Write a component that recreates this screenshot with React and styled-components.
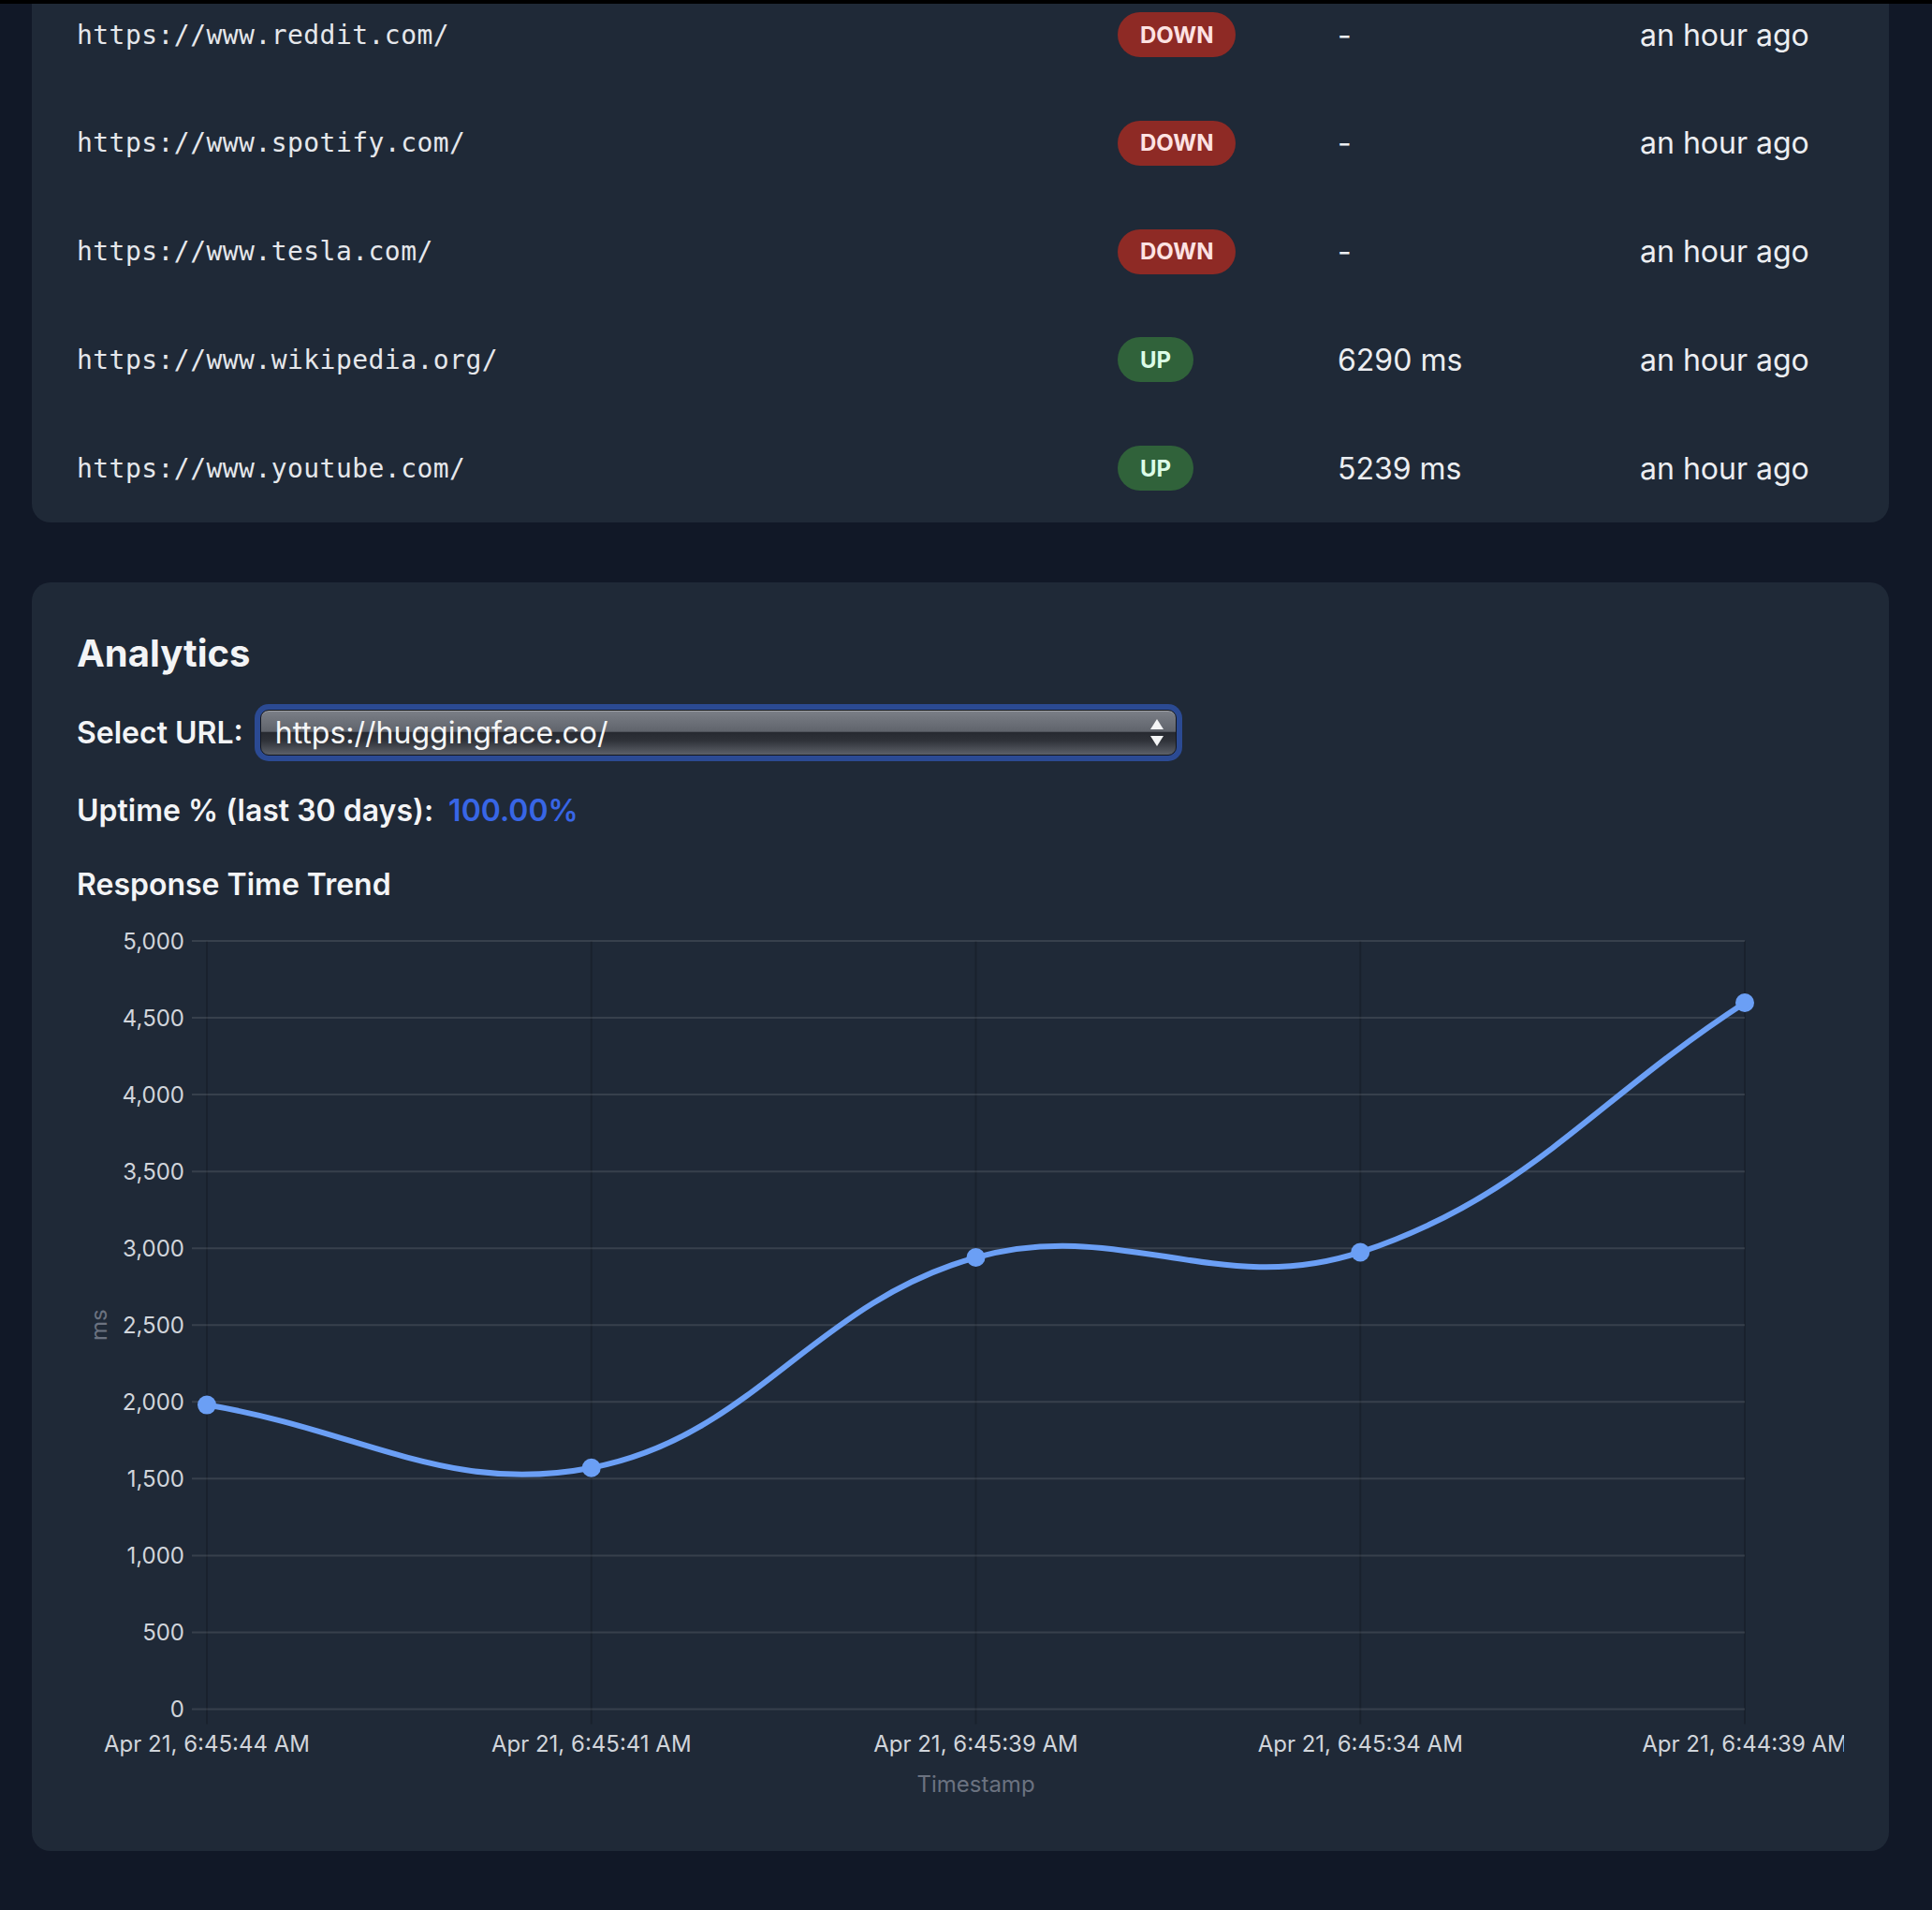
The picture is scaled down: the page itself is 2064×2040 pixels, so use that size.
import React from "react";
import styled, { createGlobalStyle } from "styled-components";

const GlobalStyle = createGlobalStyle`
  body {
    margin: 0;
    background: #111827;
    font-family: Inter, "Noto Sans", sans-serif;
    color: #f3f4f6;
  }
`;

const Page = styled.div`
  min-height: 2040px;
  background: #111827;
  overflow: hidden;
`;

const TopEdge = styled.div`
  position: relative;
  z-index: 2;
  height: 4px;
  background: #000;
`;

const Content = styled.div`
  padding: 0 46px 0 34px;
`;

const Card = styled.section`
  background: #1f2937;
  border-radius: 20px;
  padding: ${(p) => p.$padding || "48px"};
  margin-top: ${(p) => p.$top || "0"};
`;

const Row = styled.div`
  display: grid;
  grid-template-columns: 1112px 235px 323px 1fr;
  align-items: center;
  height: 115.75px;
`;

const Url = styled.span`
  font-family: "DejaVu Sans Mono", "Liberation Mono", monospace;
  font-size: 28px;
  letter-spacing: 0.45px;
  color: #e5e7eb;
`;

const Badge = styled.span`
  justify-self: start;
  display: inline-flex;
  align-items: center;
  height: 48px;
  padding: 0 24px;
  border-radius: 24px;
  font-size: 24px;
  font-weight: 700;
  background: ${(p) => (p.$up ? "#30623a" : "#8e2a25")};
  color: ${(p) => (p.$up ? "#dcfce7" : "#fde2e2")};
`;

const Cell = styled.span`
  font-size: 32px;
  color: #eceef1;
`;

const Title = styled.h2`
  margin: 0 0 26px;
  font-size: 40px;
  line-height: 56px;
  font-weight: 700;
  color: #f3f4f6;
`;

const Field = styled.div`
  display: flex;
  align-items: center;
  margin-bottom: ${(p) => p.$gap || "26px"};
`;

const Label = styled.span`
  font-size: 32px;
  line-height: 48px;
  font-weight: 600;
  color: #f3f4f6;
  margin-right: ${(p) => p.$space || "12px"};
`;

const Value = styled.span`
  font-size: 32px;
  line-height: 48px;
  font-weight: 600;
  color: #3866e6;
`;

const SelectRing = styled.div`
  position: relative;
  width: 991px;
  height: 61px;
  box-sizing: border-box;
  padding: 6px;
  border-radius: 15px;
  background: #2b4a93;
`;

const Select = styled.select`
  appearance: none;
  width: 100%;
  height: 49px;
  box-sizing: border-box;
  margin: 0;
  padding: 0 0 0 15px;
  border: 1px solid #14171c;
  border-radius: 9px;
  font-family: Inter, "Noto Sans", sans-serif;
  font-size: 32px;
  color: #f5f6f7;
  outline: none;
  background: linear-gradient(
    to bottom,
    #7b7f87 0%,
    #60646c 47%,
    #272a31 50%,
    #2f3239 68%,
    #5c6068 100%
  );
  box-shadow: inset 0 1px 0 rgba(255, 255, 255, 0.25);
`;

const Arrows = styled.svg`
  position: absolute;
  right: 20px;
  top: 16px;
  pointer-events: none;
`;

const Heading = styled.h3`
  margin: 0 0 10.7px;
  font-size: 32px;
  line-height: 48px;
  font-weight: 600;
  color: #f3f4f6;
`;

const Chart = styled.svg`
  display: block;
  font-family: Inter, "Liberation Sans", sans-serif;
`;

const sites = [
  { url: "https://www.reddit.com/", up: false, time: "-" },
  { url: "https://www.spotify.com/", up: false, time: "-" },
  { url: "https://www.tesla.com/", up: false, time: "-" },
  { url: "https://www.wikipedia.org/", up: true, time: "6290 ms" },
  { url: "https://www.youtube.com/", up: true, time: "5239 ms" },
];

const samples = [
  { label: "Apr 21, 6:45:44 AM", ms: 1980 },
  { label: "Apr 21, 6:45:41 AM", ms: 1571 },
  { label: "Apr 21, 6:45:39 AM", ms: 2940 },
  { label: "Apr 21, 6:45:34 AM", ms: 2974 },
  { label: "Apr 21, 6:44:39 AM", ms: 4598 },
];

const W = 1888;
const H = 949;
const left = 139;
const right = 1782;
const top = 25;
const bottom = 845.5;
const yFor = (v) => bottom - (v / 5000) * (bottom - top);
const xFor = (i) => left + (i * (right - left)) / (samples.length - 1);

// chart.js style spline, tension 0.4
function splinePath(pts, t = 0.4) {
  const cps = pts.map((p, i) => {
    const a = pts[i - 1] || p;
    const b = pts[i + 1] || p;
    const d01 = Math.hypot(p.x - a.x, p.y - a.y);
    const d12 = Math.hypot(b.x - p.x, b.y - p.y);
    const sum = d01 + d12 || 1;
    const fa = (t * d01) / sum;
    const fb = (t * d12) / sum;
    return {
      px: p.x - fa * (b.x - a.x),
      py: p.y - fa * (b.y - a.y),
      nx: p.x + fb * (b.x - a.x),
      ny: p.y + fb * (b.y - a.y),
    };
  });
  let d = `M${pts[0].x},${pts[0].y}`;
  for (let i = 1; i < pts.length; i++) {
    d += ` C${cps[i - 1].nx},${cps[i - 1].ny} ${cps[i].px},${cps[i].py} ${pts[i].x},${pts[i].y}`;
  }
  return d;
}

const ResponseChart = () => {
  const pts = samples.map((s, i) => ({ x: xFor(i), y: yFor(s.ms) }));
  const ticks = [0, 500, 1000, 1500, 2000, 2500, 3000, 3500, 4000, 4500, 5000];
  return (
    <Chart width={W} height={H} viewBox={`0 0 ${W} ${H}`}>
      {samples.map((s, i) => (
        <line
          key={s.label}
          x1={xFor(i)}
          x2={xFor(i)}
          y1={top}
          y2={bottom + 16}
          stroke="rgba(0,0,0,0.18)"
          strokeWidth="2"
        />
      ))}
      {ticks.map((v) => (
        <g key={v}>
          <line
            x1={left - 16}
            x2={right}
            y1={yFor(v)}
            y2={yFor(v)}
            stroke="rgba(255,255,255,0.11)"
            strokeWidth="2"
          />
          <text
            x={115}
            y={yFor(v)}
            textAnchor="end"
            dominantBaseline="central"
            fontSize="24"
            fill="#d1d5db"
          >
            {v.toLocaleString("en-US")}
          </text>
        </g>
      ))}
      {samples.map((s, i) => (
        <text
          key={s.label}
          x={xFor(i)}
          y={882}
          textAnchor="middle"
          dominantBaseline="central"
          fontSize="24"
          fill="#d1d5db"
        >
          {s.label}
        </text>
      ))}
      <text
        x={(left + right) / 2}
        y={925}
        textAnchor="middle"
        dominantBaseline="central"
        fontSize="24"
        fill="#6b7280"
      >
        Timestamp
      </text>
      <text
        transform={`translate(23 ${(top + bottom) / 2}) rotate(-90)`}
        textAnchor="middle"
        dominantBaseline="central"
        fontSize="24"
        fill="#6b7280"
      >
        ms
      </text>
      <path d={splinePath(pts)} fill="none" stroke="#6b9ff5" strokeWidth="6" />
      {pts.map((p, i) => (
        <circle key={i} cx={p.x} cy={p.y} r="10" fill="#6b9ff5" />
      ))}
    </Chart>
  );
};

export default function App() {
  return (
    <Page>
      <GlobalStyle />
      <TopEdge />
      <Content>
        <Card $padding="0 48px" $top="-24.75px">
          {sites.map((s) => (
            <Row key={s.url}>
              <Url>{s.url}</Url>
              <Badge $up={s.up}>{s.up ? "UP" : "DOWN"}</Badge>
              <Cell>{s.time}</Cell>
              <Cell>an hour ago</Cell>
            </Row>
          ))}
        </Card>

        <Card $top="64px">
          <Title>Analytics</Title>
          <Field $gap="28.6px">
            <Label>Select URL:</Label>
            <SelectRing>
              <Select defaultValue="https://huggingface.co/">
                <option>https://huggingface.co/</option>
                <option>https://www.reddit.com/</option>
                <option>https://www.spotify.com/</option>
                <option>https://www.tesla.com/</option>
                <option>https://www.wikipedia.org/</option>
                <option>https://www.youtube.com/</option>
              </Select>
              <Arrows width="14" height="29" viewBox="0 0 14 29">
                <polygon points="7,0 14,11 0,11" fill="#f4f5f6" />
                <polygon points="0,18 14,18 7,29" fill="#f4f5f6" />
              </Arrows>
            </SelectRing>
          </Field>
          <Field $gap="31.7px">
            <Label $space="16px">Uptime % (last 30 days):</Label>
            <Value>100.00%</Value>
          </Field>
          <Heading>Response Time Trend</Heading>
          <ResponseChart />
        </Card>
      </Content>
    </Page>
  );
}
